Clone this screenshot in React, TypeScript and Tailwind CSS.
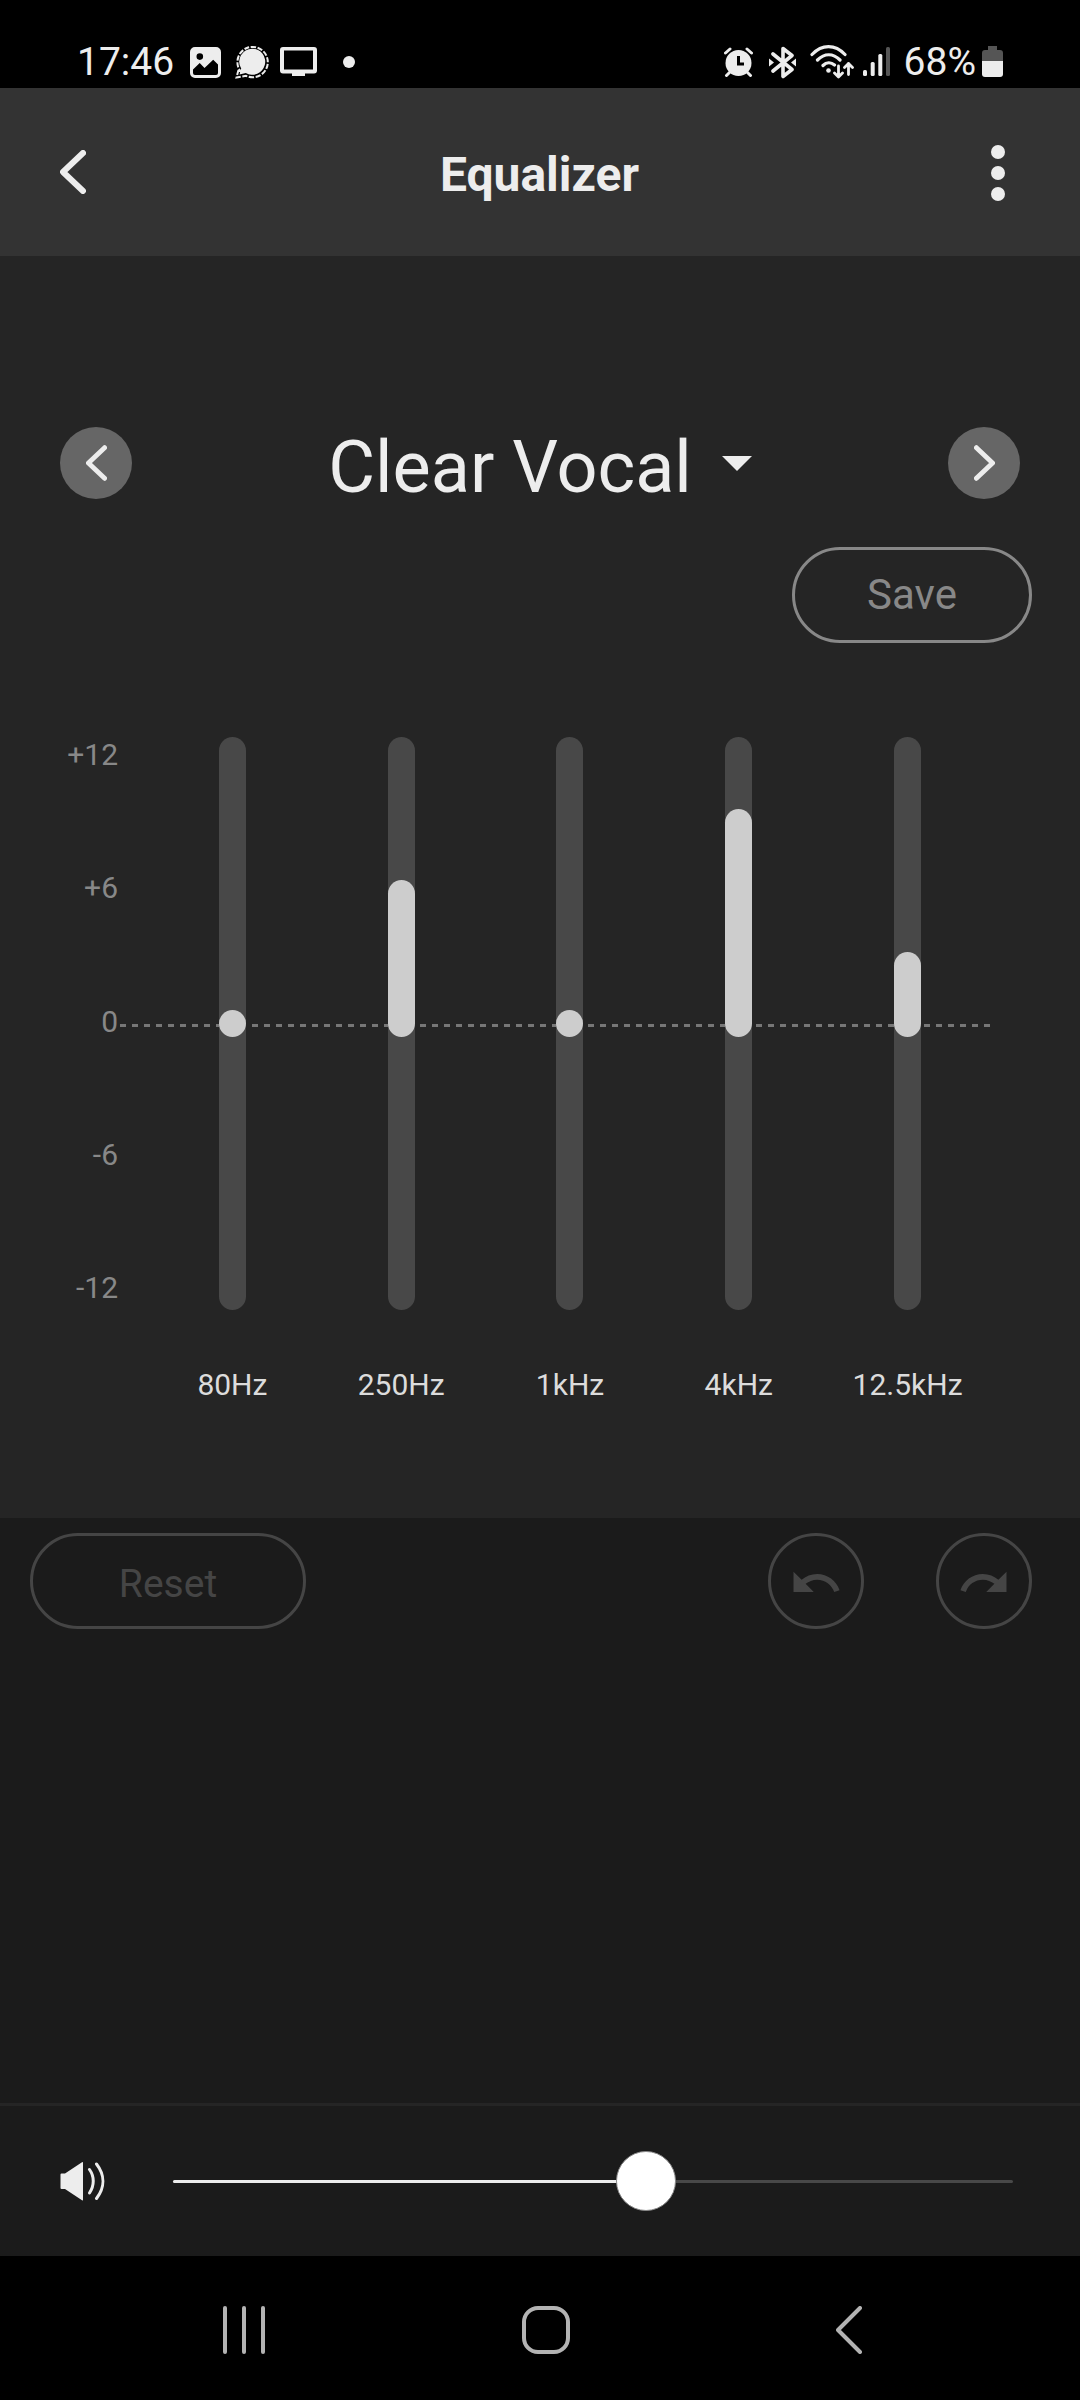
import { useState } from "react";
import { MdRedo, MdUndo } from "react-icons/md";

const PRESETS = ["Clear Vocal", "Flat", "Bass Boost", "Treble Boost", "Custom"];

const SCALE = ["+12", "+6", "0", "-6", "-12"];

const BANDS = [
  { label: "80Hz", gain: 0 },
  { label: "250Hz", gain: 6 },
  { label: "1kHz", gain: 0 },
  { label: "4kHz", gain: 9 },
  { label: "12.5kHz", gain: 3 },
];

const MAX_GAIN = 12;

function Chevron({ className, flip = false }: { className: string; flip?: boolean }) {
  return (
    <svg viewBox="0 0 26 44" className={className} fill="none" stroke="currentColor" strokeWidth="6" strokeLinecap="round" strokeLinejoin="round" aria-hidden>
      <path d={flip ? "M3 3l20 19L3 41" : "M23 3L3 22l20 19"} />
    </svg>
  );
}

function StatusBar() {
  return (
    <div className="flex h-[88px] items-center justify-between bg-black pt-9 pr-[77px] pl-[77px] text-[39px] leading-none text-[#ededed]">
      <div className="flex items-center">
        <span>17:46</span>
        <svg viewBox="0 0 31 31" className="ml-4 h-[31px] w-[31px]" aria-hidden>
          <path
            fillRule="evenodd"
            fill="currentColor"
            d="M5 0h21a5 5 0 0 1 5 5v21a5 5 0 0 1-5 5H5a5 5 0 0 1-5-5V5a5 5 0 0 1 5-5zM3 22.500v3.500a2 2 0 0 0 2 2h21a2 2 0 0 0 2-2V17.500l-4.800-4.800L14.500 21l-4.800-5zM9.800 6.300a3.300 3.300 0 1 0 0 6.600 3.300 3.300 0 0 0 0-6.600z"
          />
        </svg>
        <svg viewBox="0 0 34 34" className="ml-[14px] h-[34px] w-[34px]" aria-hidden>
          <path
            d="M7 28A15.200 15.200 0 1 1 11 30.800L1.500 32.500L3.500 25"
            fill="none"
            stroke="currentColor"
            strokeWidth="2"
            strokeDasharray="5.200 1.600"
          />
          <path d="M17.300 3.700a13 13 0 1 1-6.500 24.300L4.500 29.500l1.700-6A13 13 0 0 1 17.300 3.700z" fill="currentColor" />
        </svg>
        <svg viewBox="0 0 37 30" className="ml-[11px] h-[30px] w-[37px]" aria-hidden>
          <path
            fillRule="evenodd"
            fill="currentColor"
            d="M3 0h31a3 3 0 0 1 3 3v20.500a3 3 0 0 1-3 3h-9V29H12v-2.500H3a3 3 0 0 1-3-3V3a3 3 0 0 1 3-3zM4 3.500v19h29V3.500z"
          />
        </svg>
        <span className="ml-[26px] h-3 w-3 rounded-full bg-current" />
      </div>

      <div className="flex items-center">
        <svg viewBox="0 0 29 30" className="h-[30px] w-[29px]" fill="none" stroke="currentColor" strokeLinecap="round" aria-hidden>
          <circle cx="14.500" cy="16" r="13" fill="currentColor" stroke="none" />
          <path d="M1.500 6L6 2M27.500 6L23 2M5.500 25.500l-3 3M23.500 25.500l3 3" strokeWidth="3" />
          <path d="M14.500 9v8H20" stroke="#000" strokeWidth="3" strokeLinecap="butt" />
        </svg>
        <svg viewBox="0 0 27 33" className="ml-4 h-[33px] w-[27px]" fill="none" stroke="currentColor" strokeLinecap="round" strokeLinejoin="round" aria-hidden>
          <path d="M4 8l19 15.500-9 7V2.500l9 7L4 25" strokeWidth="3.600" />
          <path d="M0 12.500L5 16.500 0 20.500zM27 12.500l-5 4 5 4z" fill="currentColor" stroke="none" />
        </svg>
        <svg viewBox="0 0 44 34" className="ml-[14px] h-[34px] w-[44px]" fill="none" stroke="currentColor" strokeWidth="3.200" strokeLinecap="round" strokeLinejoin="round" aria-hidden>
          <path d="M2 9.500C12-1 25-1 35 9.500M7.500 15c7-7 15.500-7 22.500 0M13 20.500c3.500-3.500 8-3.500 11.500-.500" />
          <circle cx="18.500" cy="25.500" r="2.300" fill="currentColor" stroke="none" />
          <path d="M28.500 21v11M24.500 28l4 4 4-4M38.500 29.500V18.500M34.500 22.500l4-4 4 4" strokeWidth="2.800" />
        </svg>
        <svg viewBox="0 0 27 30" className="ml-[9px] h-[30px] w-[27px]" fill="currentColor" aria-hidden>
          <rect x="0" y="23" width="4" height="6" rx="1.500" />
          <rect x="7.700" y="15" width="4" height="14" rx="1.500" />
          <rect x="15.300" y="7" width="4" height="22" rx="1.500" />
          <rect x="23" y="0" width="4" height="29" rx="1.500" fill="#555" />
        </svg>
        <span className="ml-[14px]">68%</span>
        <svg viewBox="0 0 21 32" className="ml-[6px] h-8 w-[21px]" aria-hidden>
          <path d="M6 0h9v4h3a3 3 0 0 1 3 3v8H0V7a3 3 0 0 1 3-3h3z" fill="#555" />
          <path d="M0 15h21v13a3 3 0 0 1-3 3H3a3 3 0 0 1-3-3z" fill="currentColor" />
        </svg>
      </div>
    </div>
  );
}

function Band({ label, gain, onChange }: { label: string; gain: number; onChange: (gain: number) => void }) {
  const offset = (Math.abs(gain) / MAX_GAIN) * 50;
  // the bar always keeps a rounded cap on the far side of the zero line
  const bar =
    gain >= 0
      ? { top: gain === 0 ? "calc(50% - 14px)" : `${50 - offset}%`, bottom: "calc(50% - 13px)" }
      : { top: "calc(50% - 14px)", bottom: `${50 - offset}%` };

  return (
    <label className="flex flex-col items-center gap-[55px]">
      <span className="relative block h-[573px] w-[27px] rounded-full bg-[#484848]">
        <span className="absolute inset-x-0 rounded-full bg-[#cdcdcd]" style={bar} />
        <input
          type="range"
          min={-MAX_GAIN}
          max={MAX_GAIN}
          value={gain}
          onChange={(e) => onChange(Number(e.target.value))}
          className="absolute inset-0 h-full w-full opacity-0 [direction:rtl] [writing-mode:vertical-lr]"
        />
      </span>
      <span className="text-[30px] leading-10 text-[#dcdcdc]">{label}</span>
    </label>
  );
}

export default function App() {
  const [preset, setPreset] = useState(0);
  const [gains, setGains] = useState(BANDS.map((band) => band.gain));
  const [volume, setVolume] = useState(9);

  const step = (delta: number) => setPreset((preset + delta + PRESETS.length) % PRESETS.length);

  return (
    <div className="flex min-h-screen flex-col bg-[#1b1b1b] font-[Roboto,sans-serif] text-[#ededed]">
      <StatusBar />

      <header className="grid h-[168px] grid-cols-[1fr_auto_1fr] items-center bg-[#333] pr-[75px] pl-[60px]">
        <button type="button" aria-label="Back" className="justify-self-start">
          <Chevron className="h-[44px] w-[26px]" />
        </button>
        <h1 className="pt-[6px] pr-0 pl-[14px] text-5xl leading-none font-bold">Equalizer</h1>
        <button type="button" aria-label="More options" className="flex flex-col gap-[7px] justify-self-end pt-[2px]">
          <span className="h-[14px] w-[14px] rounded-full bg-current" />
          <span className="h-[14px] w-[14px] rounded-full bg-current" />
          <span className="h-[14px] w-[14px] rounded-full bg-current" />
        </button>
      </header>

      <main className="bg-[#252525] pt-[171px] pb-[113px]">
        <div className="flex h-[72px] items-center justify-between px-[60px]">
          <button type="button" aria-label="Previous preset" onClick={() => step(-1)} className="flex h-[72px] w-[72px] items-center justify-center rounded-full bg-[#666]">
            <Chevron className="h-9 w-[21px]" />
          </button>
          <label className="flex items-center gap-[30px]">
            <select
              aria-label="Preset"
              value={preset}
              onChange={(e) => setPreset(Number(e.target.value))}
              className="appearance-none bg-transparent pt-[10px] text-7xl leading-[88px] outline-none [field-sizing:content]"
            >
              {PRESETS.map((name, i) => (
                <option key={name} value={i}>
                  {name}
                </option>
              ))}
            </select>
            <svg viewBox="0 0 30 15" className="h-[15px] w-[30px]" fill="currentColor" aria-hidden>
              <path d="M0 0h30L15 15z" />
            </svg>
          </label>
          <button type="button" aria-label="Next preset" onClick={() => step(1)} className="flex h-[72px] w-[72px] items-center justify-center rounded-full bg-[#666]">
            <Chevron flip className="h-9 w-[21px]" />
          </button>
        </div>

        <div className="mt-12 flex justify-end pr-12">
          <button type="button" className="h-24 w-60 rounded-full border-[3px] border-[#888] text-[42px] leading-none text-[#888]">
            Save
          </button>
        </div>

        <div className="mt-[94px] flex items-start gap-[30px] pr-[88px]">
          <div className="-mt-[2px] flex h-[573px] w-[118px] flex-col justify-between text-right text-[30px] leading-10 text-[#888]">
            {SCALE.map((mark) => (
              <span key={mark}>{mark}</span>
            ))}
          </div>
          <div className="relative grid flex-1 grid-cols-5">
            {/* zero line */}
            <div className="absolute top-[287px] right-[2px] -left-7 h-[3px] bg-[repeating-linear-gradient(90deg,#777_0_6px,transparent_6px_12px)]" />
            {BANDS.map((band, i) => (
              <Band
                key={band.label}
                label={band.label}
                gain={gains[i]}
                onChange={(gain) => setGains(gains.map((g, j) => (j === i ? gain : g)))}
              />
            ))}
          </div>
        </div>
      </main>

      <div className="flex flex-1 justify-between pt-[15px] pr-12 pb-12 pl-[30px] text-[#454545]">
        <button type="button" className="h-24 w-[276px] rounded-full border-[3px] border-current pt-[6px] text-[39px] leading-none">
          Reset
        </button>
        <div className="flex gap-[72px]">
          <button type="button" aria-label="Undo" className="flex h-24 w-24 items-center justify-center rounded-full border-[3px] border-current pt-1">
            <MdUndo size={54} />
          </button>
          <button type="button" aria-label="Redo" className="flex h-24 w-24 items-center justify-center rounded-full border-[3px] border-current pt-1">
            <MdRedo size={54} />
          </button>
        </div>
      </div>

      <div className="flex h-[153px] items-center gap-[67px] border-t-[3px] border-[#252525] pr-[67px] pl-[60px]">
        <svg viewBox="0 0 46 40" className="h-10 w-[46px]" fill="none" stroke="currentColor" strokeWidth="3" strokeLinecap="round" aria-hidden>
          <path d="M1.500 12.500H5L22 1.200q1-.700 1 .500v37q0 1.200-1 .500L5 28H1.500Q.500 28 .500 27V13.500q0-1 1-1z" fill="currentColor" stroke="none" />
          <path d="M29.500 8.500c5 7 5 16 0 23.500M36.500 3c8.500 11 8.500 23.500 0 34.500" />
        </svg>
        <div className="relative flex-1">
          <div className="h-[3px] rounded-full bg-[#484848]">
            <div className="h-full rounded-full bg-[#ededed]" style={{ width: `${(volume / 16) * 100}%` }} />
          </div>
          <span
            className="absolute top-1/2 h-[60px] w-[60px] -translate-1/2 rounded-full border border-[#888] bg-white"
            style={{ left: `${(volume / 16) * 100}%` }}
          />
          <input
            type="range"
            aria-label="Volume"
            min={0}
            max={16}
            value={volume}
            onChange={(e) => setVolume(Number(e.target.value))}
            className="absolute inset-x-0 top-1/2 h-[60px] w-full -translate-y-1/2 opacity-0"
          />
        </div>
      </div>

      <nav className="grid h-36 grid-cols-3 place-items-center bg-black pt-1 pr-20 pl-[93px] text-[#b3b3b3]">
        <button type="button" aria-label="Recent apps" className="flex h-12 gap-[15px]">
          <span className="w-1 rounded-full bg-current" />
          <span className="w-1 rounded-full bg-current" />
          <span className="w-1 rounded-full bg-current" />
        </button>
        <button type="button" aria-label="Home" className="h-12 w-12 rounded-2xl border-4 border-current" />
        <button type="button" aria-label="Back">
          <svg viewBox="0 0 26 48" className="h-12 w-[26px]" fill="none" stroke="currentColor" strokeWidth="4" strokeLinecap="round" strokeLinejoin="round" aria-hidden>
            <path d="M24 2L2 24l22 22" />
          </svg>
        </button>
      </nav>
    </div>
  );
}
